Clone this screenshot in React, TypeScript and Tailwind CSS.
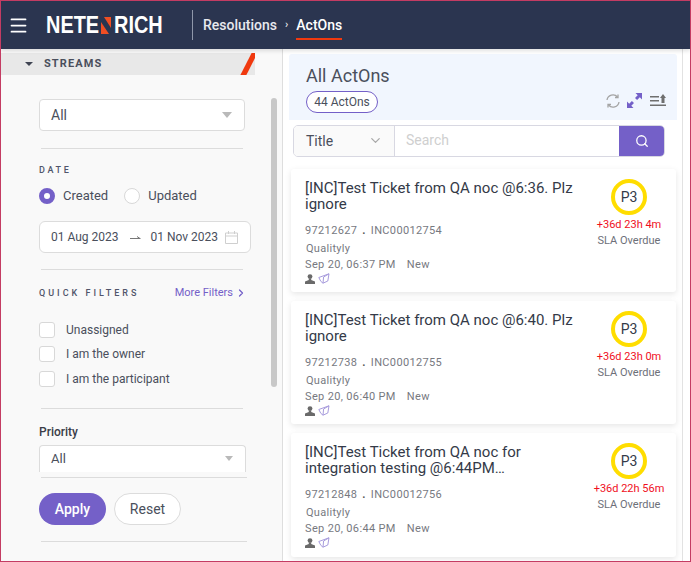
import React from 'react';
import { ChevronDown, ChevronRight, Menu, Search } from 'lucide-react';

const tickets = [
  { title: '[INC]Test Ticket from QA noc @6:36. Plz ignore', id: '97212627', inc: 'INC00012754', date: 'Sep 20, 06:37 PM', sla: '+36d 23h 4m', h: 'h-[123px]' },
  { title: '[INC]Test Ticket from QA noc @6:40. Plz ignore', id: '97212738', inc: 'INC00012755', date: 'Sep 20, 06:40 PM', sla: '+36d 23h 0m', h: 'h-[123px]' },
  { title: '[INC]Test Ticket from QA noc for integration testing @6:44PM…', id: '97212848', inc: 'INC00012756', date: 'Sep 20, 06:44 PM', sla: '+36d 22h 56m', h: 'h-[124px]' },
];

const Caret = () => (
  <span className="h-0 w-0 border-x-[5px] border-t-[6px] border-x-transparent border-t-[#b9b9b9]" />
);

const Divider = ({ className }: { className: string }) => <div className={`h-px bg-[#dcdcdc] ${className}`} />;

const Check = ({ label }: { label: string }) => (
  <div className="flex h-[24px] items-center">
    <span className="h-4 w-4 rounded-[3px] border border-[#d8d8d8] bg-white" />
    <span className="ml-[11px] text-xs text-[#4a4f5c]">{label}</span>
  </div>
);

const Logo = () => (
  <div className="ml-[17px] flex h-5 w-[116px] items-center font-['Liberation_Sans',sans-serif] text-[24px] leading-5 font-bold text-white">
    <span className="inline-block origin-left scale-x-[0.83]">NETE</span>
    <svg viewBox="0 0 10 17" className="ml-[-9px] h-[17px] w-[10px] shrink-0">
      <rect width="10" height="17" fill="#f04e23" />
      <path d="M0 0h3l7 11v6H8L0 5z" fill="#2b3550" />
    </svg>
    <span className="ml-[3px] inline-block origin-left scale-x-[0.83]">RICH</span>
  </div>
);

const Ticket = ({ t }: { t: (typeof tickets)[number] }) => (
  <div className={`flex ${t.h} w-[385px] shrink-0 rounded-[3px] bg-white pt-[11px] pl-[14px] shadow-[0_2px_6px_rgba(0,0,0,0.1)]`}>
    <div className="w-[285px]">
      <div className="w-[280px] text-[15px] leading-4 text-[#343a48]">{t.title}</div>
      <div className="mt-[11px] flex items-center text-[11px] leading-4 tracking-[0.35px] text-[#77797f]">
        <span>{t.id}</span>
        <span className="mx-[5px] font-bold text-[#555]">.</span>
        <span>{t.inc}</span>
      </div>
      <div className="mt-[2px] ml-px text-[11px] leading-4 tracking-[0.3px] text-[#77797f]">Qualityly</div>
      <div className="flex text-[11px] leading-4 tracking-[0.35px] text-[#77797f]">
        <span>{t.date}</span>
        <span className="ml-[11px]">New</span>
      </div>
      <div className="flex items-center gap-[3px]">
        <svg viewBox="0 0 10 10" className="h-[10px] w-[10px]" fill="#6a6a6a">
          <circle cx="5" cy="2.6" r="2.4" />
          <path d="M3.8 4.5h2.4v1.4L10 7.5V10H0V7.5l3.8-1.6z" />
        </svg>
        <svg viewBox="0 0 12 11" className="h-[11px] w-3" fill="none" stroke="#a79bdc" strokeWidth="1">
          <path d="M.8 4.5L11 .8 9.8 8 5 10.2 2.8 8.3zM5 10.2L5.6 4 11 .8" />
        </svg>
      </div>
    </div>
    <div className="mt-[-1px] flex w-[78px] flex-col items-center">
      <div className="flex h-9 w-9 items-center justify-center rounded-full border-[4px] border-[#ffdd00] text-sm text-[#343a48]">P3</div>
      <div className="mt-[2px] text-[11px] leading-4 whitespace-nowrap text-[#f00f1e]">{t.sla}</div>
      <div className="text-[11px] leading-4 text-[#6d7079]">SLA Overdue</div>
    </div>
  </div>
);

export default function App() {
  return (
    <div className="flex h-[562px] w-[691px] flex-col overflow-hidden border border-[#c43c63] bg-white font-['Roboto',sans-serif]">
      {/* Top bar */}
      <header className="relative z-10 flex h-[48px] shrink-0 items-center bg-[#2b3550] pl-[7px] text-white shadow-[0_2px_4px_rgba(0,0,0,0.12)]">
        <Menu size={21} />
        <Logo />
        <div className="ml-[30px] h-[30px] w-px bg-[#8f97aa]" />
        <div className="ml-[10px] flex items-center text-sm font-medium text-[#e8e9ee]">
          <span>Resolutions</span>
          <span className="mx-[8px] text-[11px]">›</span>
          <span className="relative text-white">
            ActOns
            <span className="absolute top-[23px] right-0 left-0 h-[2px] bg-[#f0390f]" />
          </span>
        </div>
      </header>

      <div className="flex min-h-0 flex-1">
        {/* Filters */}
        <aside className="relative flex w-[282px] shrink-0 flex-col border-r border-[#dedede] bg-[#f9f9f9]">
          <div className="mt-[4px] flex h-[22px] w-[254px] items-center overflow-hidden bg-[#e8e8e8] pl-[24px]">
            <span className="h-0 w-0 border-x-[4px] border-t-[4px] border-x-transparent border-t-[#3f4452]" />
            <span className="ml-[11px] text-[11px] font-bold tracking-[1.1px] text-[#4a4f5c]">STREAMS</span>
            <span className="ml-auto h-[24px] w-[6px] translate-x-[-3px] skew-x-[-27deg] bg-[#f0390f]" />
          </div>
          <div className="mt-[24px] ml-[38px] flex h-[32px] w-[206px] items-center justify-between rounded-[4px] border border-[#dcdcdc] bg-white pr-3 pl-[11px] text-sm text-[#4a4f5c]">
            All
            <Caret />
          </div>
          <Divider className="mt-[17px] ml-[40px] w-[202px]" />
          <div className="mt-[15px] ml-[38px] text-[9px] leading-3 font-medium tracking-[2.7px] text-[#50556a]">DATE</div>
          <div className="mt-[12px] ml-[38px] flex h-4 items-center text-[13px] text-[#4a4f5c]">
            <span className="h-4 w-4 rounded-full border-[5px] border-[#7460c8] bg-white" />
            <span className="ml-2">Created</span>
            <span className="ml-[16px] h-4 w-4 rounded-full border border-[#d8d8d8] bg-white" />
            <span className="ml-[8px]">Updated</span>
          </div>
          <div className="mt-[17px] ml-[38px] flex h-[32px] w-[212px] items-center rounded-[6px] border border-[#dcdcdc] bg-white pl-[11px] text-xs text-[#4a4f5c]">
            <span>01 Aug 2023</span>
            <svg viewBox="0 0 11 6" className="mr-[10px] ml-[11px] h-[6px] w-[11px]" fill="none" stroke="#777">
              <path d="M0 4.5h10.5M7 2.5l3 2" />
            </svg>
            <span>01 Nov 2023</span>
            <svg viewBox="0 0 13 13" className="ml-[7px] h-[13px] w-[13px]" fill="none" stroke="#cfcfcf">
              <path d="M.5 2h12v10.5H.5zM.5 5h12M3.5 0v3M9.5 0v3" />
            </svg>
          </div>
          <Divider className="mt-[16px] ml-[40px] w-[202px]" />
          <div className="mt-[15px] ml-[38px] flex w-[208px] items-center justify-between">
            <span className="text-[9px] font-medium tracking-[3px] text-[#50556a]">QUICK FILTERS</span>
            <span className="flex items-center text-[11px] text-[#7460c8]">
              More Filters
              <ChevronRight size={12} strokeWidth={2.5} className="ml-[2px]" />
            </span>
          </div>
          <div className="mt-[16px] ml-[38px] flex flex-col">
            <Check label="Unassigned" />
            <Check label="I am the owner" />
            <div className="mt-px">
              <Check label="I am the participant" />
            </div>
          </div>
          <Divider className="mt-[17px] ml-[40px] w-[202px]" />
          <div className="mt-[15px] ml-[38px] text-xs leading-4 font-medium text-[#3a3d48]">Priority</div>
          <div className="mt-[5px] ml-[38px] flex h-[27px] w-[207px] items-center justify-between rounded-t-[4px] border-x border-t border-[#dcdcdc] bg-white pr-3 pl-[11px] text-[13px] text-[#4a4f5c]">
            All
            <span className="h-0 w-0 border-x-[4px] border-t-[5px] border-x-transparent border-t-[#b9b9b9]" />
          </div>
          <Divider className="mt-[5px] ml-[40px] w-[206px]" />
          <div className="mt-[15px] ml-[38px] flex gap-2">
            <button className="h-8 w-[67px] rounded-full bg-[#7460c8] text-sm font-medium text-white">Apply</button>
            <button className="h-8 w-[67px] rounded-full border border-[#dcdcdc] bg-white text-sm text-[#4a4f5c]">Reset</button>
          </div>
          <Divider className="mt-4 ml-[40px] w-[206px]" />
          {/* overlay scrollbar */}
          <div className="absolute top-[49px] right-[5px] h-[289px] w-[6px] rounded-full bg-[#c8c8c8]" />
        </aside>

        {/* Tickets */}
        <main className="flex w-[400px] shrink-0 flex-col overflow-hidden border-r border-[#e2e2e2] pt-[5px] pl-[6px]">
          <div className="relative h-[66px] w-[388px] shrink-0 rounded-t-[3px] bg-[#f1f6fe] pt-[11px] pl-[17px]">
            <div className="text-lg leading-[22px] text-[#4a4f5c]">All ActOns</div>
            <div className="mt-[4px] flex h-[22px] w-[72px] items-center justify-center rounded-full border border-[#7460c8] bg-white text-xs text-[#4a4f5c]">44 ActOns</div>
            <div className="absolute top-[39px] right-[11px] flex items-center">
              <svg viewBox="0 0 14 14" className="h-[14px] w-[14px]" fill="none" stroke="#a4a4a4" strokeWidth="1.3">
                <path d="M1 6a6 6 0 0 1 10.5-3M13 8a6 6 0 0 1-10.5 3" />
                <path d="M12 .5v3H9M2 13.5v-3h3" />
              </svg>
              <svg viewBox="0 0 15 15" className="ml-[7px] h-[15px] w-[15px]" fill="#7460c8">
                <path d="M8.5 0H15v6.5l-2.2-2.2-2.7 2.7-2.1-2.1 2.7-2.7z" />
                <path d="M6.5 15H0V8.5l2.2 2.2 2.7-2.7 2.1 2.1-2.7 2.7z" />
              </svg>
              <svg viewBox="0 0 16 13" className="ml-[8px] h-[13px] w-[16px]" fill="#6f6f6f">
                <path d="M0 2h9v1.6H0zM0 6h9v1.6H0zM0 10.5h16V12H0zM11.5 9V4H10l3-4 3 4h-1.5v5z" />
              </svg>
            </div>
          </div>
          <div className="mt-[5px] ml-[4px] flex h-[32px] w-[372px] shrink-0 overflow-hidden rounded-[5px] border border-[#d8d8e2]">
            <div className="flex w-[101px] items-center justify-between border-r border-[#d8d8e2] bg-[#fafafa] pr-[11px] pb-px pl-[12px] text-sm text-[#4a4f5c]">
              Title
              <ChevronDown size={15} className="text-[#a8a8a8]" />
            </div>
            <div className="flex flex-1 items-center bg-white pb-[2px] pl-[11px] text-sm text-[#cfcfcf]">Search</div>
            <div className="mt-[-1px] mr-[-1px] mb-[-1px] flex w-[46px] items-center justify-center bg-[#7460c8]">
              <Search size={14} strokeWidth={2.2} className="text-white" />
            </div>
          </div>
          <div className="mt-[12px] ml-[2px] flex flex-col gap-[9px]">
            {tickets.map((t) => (
              <Ticket key={t.id} t={t} />
            ))}
          </div>
        </main>
      </div>
    </div>
  );
}
